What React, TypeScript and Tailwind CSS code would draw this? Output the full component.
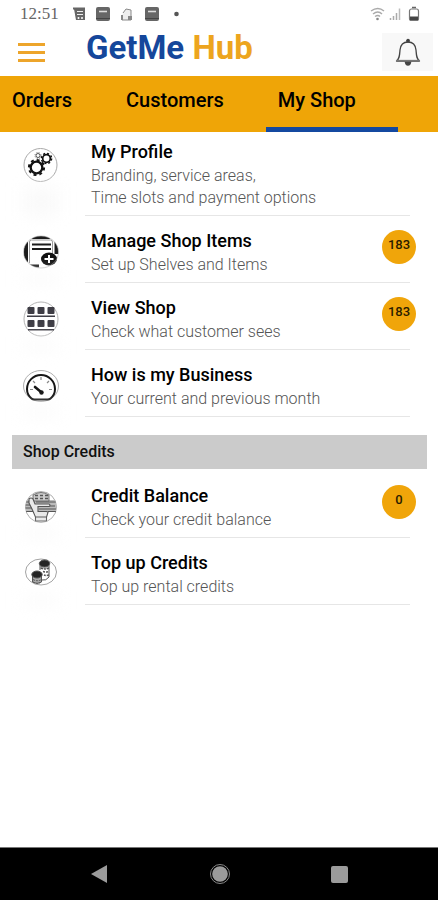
import React from 'react';

interface ShopItem {
  title: string;
  lines: string[];
  icon: React.ReactNode;
  badge?: number;
}

const GearsIcon = () => (
  <svg viewBox="0 0 36 36" className="h-9 w-9" fill="none" stroke="#111">
    <circle cx="17.500" cy="18" r="16.500" stroke="#aaa" />
    <circle cx="13.500" cy="20.500" r="5.800" strokeWidth="2.300" />
    <circle cx="13.500" cy="20.500" r="7.600" strokeWidth="2" strokeDasharray="2.980 2.980" />
    <circle cx="23.500" cy="11.500" r="3.800" strokeWidth="1.700" />
    <circle cx="23.500" cy="11.500" r="5.100" strokeWidth="1.500" strokeDasharray="2 2" />
    <circle cx="15" cy="8.500" r="2" stroke="#555" strokeWidth="1" />
    <circle cx="15" cy="8.500" r="3" stroke="#777" strokeWidth="1" strokeDasharray="1.200 1.200" />
  </svg>
);

const ListAddIcon = () => (
  <svg viewBox="0 0 36 36" className="h-9 w-9" fill="none" stroke="#1c1c1c">
    <clipPath id="listClip"><ellipse cx="18" cy="18" rx="17.5" ry="16" /></clipPath>
    <g clipPath="url(#listClip)">
      <path d="M9 3.500h18" strokeWidth="3" />
      <path d="M3 8v20M33.500 8v12" strokeWidth="4" />
      <path d="M6.500 29V8q0-2 2-2h19q2 0 2 2v12" stroke="#999" strokeWidth="1" />
      <path d="M9 10.500h19M9 15h19" strokeWidth="2.200" />
      <path d="M7 32h9" strokeWidth="3" />
    </g>
    <ellipse cx="26" cy="25" rx="8" ry="6.500" fill="#111" stroke="none" />
    <path d="M21.500 25h9M26 21v8" stroke="#fff" strokeWidth="2" />
    <ellipse cx="18" cy="18" rx="17.500" ry="16" stroke="#aaa" strokeWidth="0.600" />
  </svg>
);

const ShelvesIcon = () => (
  <svg viewBox="0 0 36 36" className="h-9 w-9" fill="#3e3d45">
    <circle cx="18" cy="18" r="17" fill="none" stroke="#aaa" strokeWidth="0.9" />
    <rect x="4.500" y="6" width="7" height="7" rx="1" />
    <rect x="14.500" y="6" width="7" height="7" rx="1" />
    <rect x="24.500" y="6" width="7" height="7" rx="1" />
    <rect x="4.500" y="19" width="7" height="7" rx="1" />
    <rect x="14.500" y="19" width="7" height="7" rx="1" />
    <rect x="24.500" y="19" width="7" height="7" rx="1" />
    <path d="M4 14.500h28v1.600H4zM5 28h26v1.600H5z" />
  </svg>
);

const GaugeIcon = () => (
  <svg viewBox="0 0 36 36" className="h-9 w-9" fill="none" stroke="#161616">
    <ellipse cx="18" cy="18" rx="17.5" ry="15.500" stroke="#999" strokeWidth="0.8" />
    <path d="M8.500 30.500C5.500 28 4 25 4 21a14 14 0 0 1 28 0c0 4-1.500 7-4.500 9.500q-1 1-3 1h-13q-2 0-3-1z" strokeWidth="2" strokeLinejoin="round" />
    <path d="M18 9v3M7 21.500h3M26 21.500h3M10 13l2 2M26 13l-2 2" stroke="#888" strokeWidth="1.200" />
    <path d="M12 19l6 5" strokeWidth="2.600" strokeLinecap="round" />
    <circle cx="18.500" cy="24.500" r="2.200" fill="#161616" stroke="none" />
  </svg>
);

const BalanceIcon = () => (
  <svg viewBox="0 0 36 36" className="h-9 w-9" fill="none" stroke="#555">
    <clipPath id="balanceClip"><circle cx="18" cy="18" r="15.500" /></clipPath>
    <circle cx="18" cy="18" r="15.500" stroke="#999" strokeWidth="0.800" />
    <g clipPath="url(#balanceClip)">
      <rect x="2" y="11" width="32" height="11.500" fill="#bbb" stroke="none" />
      <path d="M10 12V6q8-5 16 0v6z" fill="#ccc" strokeWidth="0.800" />
      <path d="M12 6.500h3M17 6.500h3M22 6.500h3M12 9.500h3M17 9.500h3M22 9.500h3" strokeWidth="1.500" />
      <path d="M2 13h9M13 13h21M2 16h6M15 17h17M2 19h7M16 20h17M2 22.500h9M25 22.500h9" strokeWidth="1.100" />
      <path d="M6 10q2-2 4 0l2 5h14q2 1 0 2.500H15v5h9l1 1-1.500 4.500v4h-11v-4L9 20 6 14z" fill="#e9e9e9" strokeWidth="1.100" />
      <path d="M12.500 28h11" strokeWidth="1" />
    </g>
  </svg>
);

const CoinsIcon = () => (
  <svg viewBox="0 0 36 36" className="h-9 w-9" fill="none" stroke="#555">
    <ellipse cx="18" cy="16" rx="15.500" ry="13" stroke="#999" strokeWidth="0.900" />
    <path d="M17 9v4h9V9z" fill="#ccc" stroke="none" />
    <path d="M17 9v5M26 9v12M19 24q4 1 7-3" strokeWidth="1" />
    <path d="M18 12q4 2 8 0M20 15.500q3 1 6 0M21 19q2 1 5 0" strokeWidth="1.400" strokeDasharray="2 1" />
    <path d="M9.500 19v7q4.500 3 9 0v-7" fill="#aaa" strokeWidth="1" />
    <path d="M10 23.500q4.500 2.500 8.500 0M10 26q4.500 2.500 8.500 0" strokeWidth="1" strokeDasharray="2 1" />
    <ellipse cx="21.500" cy="7.500" rx="5.200" ry="3.500" fill="#252525" />
    <ellipse cx="14" cy="18.500" rx="5.200" ry="3.500" fill="#252525" />
  </svg>
);

const shopItems: ShopItem[] = [
  { title: 'My Profile', lines: ['Branding, service areas,', 'Time slots and payment options'], icon: <GearsIcon /> },
  { title: 'Manage Shop Items', lines: ['Set up Shelves and Items'], icon: <ListAddIcon />, badge: 183 },
  { title: 'View Shop', lines: ['Check what customer sees'], icon: <ShelvesIcon />, badge: 183 },
  { title: 'How is my Business', lines: ['Your current and previous month'], icon: <GaugeIcon /> },
];

const creditItems: ShopItem[] = [
  { title: 'Credit Balance', lines: ['Check your credit balance'], icon: <BalanceIcon />, badge: 0 },
  { title: 'Top up Credits', lines: ['Top up rental credits'], icon: <CoinsIcon /> },
];

const tabs = ['Orders', 'Customers', 'My Shop'];

const StatusBar = () => (
  <div className="flex h-7 items-center justify-between pr-4 pl-5">
    <div className="flex items-center">
      <span className="w-[53px] font-['Liberation_Serif',serif] text-[17px] leading-7 text-[#666]">12:51</span>
      <svg viewBox="0 0 106 16" className="h-4 w-[106px]">
        <path d="M-1 1.500h13v2H-1z" fill="#666" />
        <path d="M1 3h11v11H3z" fill="#666" />
        <path d="M4 5.500h6M4 8.500h6" stroke="#eee" strokeWidth="1.200" />
        <circle cx="5.500" cy="12" r="1" fill="#fff" /><circle cx="9" cy="12" r="1" fill="#fff" />
        <rect x="23" y="1" width="14" height="14" rx="2" fill="#666" />
        <path d="M26 5.500h8" stroke="#ddd" strokeWidth="1.600" />
        <path d="M23 12.500h14" stroke="#444" />
        <path d="M50 7l3-4 5 1v10h-9V9" fill="#eee" stroke="#888" strokeWidth="1" />
        <path d="M48 14V9h2v5M55 14v-4h4v4" fill="#888" />
        <rect x="72" y="1" width="14" height="14" rx="2" fill="#666" />
        <path d="M75 5.500h8" stroke="#ddd" strokeWidth="1.600" />
        <path d="M72 12.500h14" stroke="#444" />
        <circle cx="103.500" cy="8" r="2.300" fill="#555" />
      </svg>
    </div>
    <svg viewBox="0 0 52 16" className="h-4 w-[52px]" fill="none">
      <path d="M1 5q7-5 13 0M3 8q5-4 9 0M5 10.500q3-2 5 0" stroke="#aaa" strokeWidth="1.400" />
      <circle cx="7.500" cy="13" r="1.300" fill="#888" />
      <path d="M20.500 14v-2M23.500 14v-4M26.500 14V7" stroke="#aaa" strokeWidth="1.500" />
      <path d="M29.500 14V2.500" stroke="#bbb" strokeWidth="1.500" />
      <rect x="39.500" y="3" width="9" height="11.500" rx="2" stroke="#777" strokeWidth="1.200" />
      <path d="M42 1.500h4" stroke="#666" strokeWidth="1.500" />
      <path d="M40 10.500h8v3.500h-8z" fill="#444" />
    </svg>
  </div>
);

const ItemRow: React.FC<{ item: ShopItem; first?: boolean }> = ({ item, first }) => (
  <li>
    <button className="flex w-full pr-7 text-left">
      <span className={`flex w-[85px] flex-shrink-0 flex-col items-center self-stretch pr-1 ${first ? 'pt-[15px]' : 'pt-[18px]'}`}>
        {item.icon}
        <span className="mt-1 min-h-2 w-9 flex-1 bg-[#fafafa] blur-sm" />
      </span>
      <span className={`flex flex-1 items-start justify-between border-b border-[#e6e6e6] pb-[6px] pl-[6px] ${first ? 'pt-[9px]' : 'pt-[14px]'}`}>
        <span className="flex flex-col gap-[2px]">
          <span className="text-lg leading-[22px] font-medium text-black">{item.title}</span>
          <span className="text-base leading-[22px] font-light text-[#555]">
            {item.lines.map(line => <span key={line} className="block">{line}</span>)}
          </span>
        </span>
        {item.badge !== undefined && (
          <span className="-mr-[6px] flex h-[34px] w-[34px] items-center justify-center rounded-full bg-[#f0a50a] pb-1 text-[13px] font-medium text-[#2a1c00]">
            {item.badge}
          </span>
        )}
      </span>
    </button>
  </li>
);

export default function App() {
  return (
    <div className="flex min-h-screen flex-col bg-white font-[Roboto,sans-serif]">
      <StatusBar />
      <header className="flex h-12 items-center pr-[5px] pl-[18px]">
        <button aria-label="Menu" className="flex w-[27px] flex-col gap-[5px]">
          <span className="h-[3px] w-full bg-[#eda52b]" />
          <span className="h-[3px] w-full bg-[#eda52b]" />
          <span className="h-[3px] w-full bg-[#eda52b]" />
        </button>
        <h1 className="ml-[41px] flex-1 pb-2 text-[33px] leading-[38px] font-bold text-[#15479b]">
          GetMe <span className="text-[#eda51e]">Hub</span>
        </h1>
        <button aria-label="Notifications" className="flex h-[38px] w-[51px] items-center justify-center bg-[#f8f8f8]">
          <svg viewBox="0 0 26 28" className="h-7 w-[26px]" fill="none" stroke="#444" strokeWidth="1.300">
            <path d="M1.500 23c3-2 3-5 3.500-11 .5-5 3-8 8-8s7.500 3 8 8c.5 6 .5 9 3.500 11z" strokeLinejoin="round" />
            <path d="M1 22.500h24" stroke="#777" />
            <circle cx="13" cy="2.800" r="1.300" fill="#333" />
            <path d="M10.500 24.500h5q-.5 2.500-2.500 2.500t-2.500-2.500z" fill="#444" />
          </svg>
        </button>
      </header>

      <nav className="flex h-14 bg-[#efa507]">
        {tabs.map(tab => (
          <button
            key={tab}
            className={`border-b-[5px] pr-[42px] pb-[3px] pl-3 text-xl font-medium text-black ${tab === 'My Shop' ? 'border-[#1449a0]' : 'border-transparent'}`}
          >
            {tab}
          </button>
        ))}
      </nav>

      <main className="flex-1">
        <ul>
          {shopItems.map((item, i) => <ItemRow key={item.title} item={item} first={i === 0} />)}
        </ul>
        <h2 className="mt-[18px] mr-[11px] mb-[2px] ml-3 bg-[#cbcbcb] px-[11px] text-base leading-[34px] font-medium text-[#111]">
          Shop Credits
        </h2>
        <ul>
          {creditItems.map(item => <ItemRow key={item.title} item={item} />)}
        </ul>
      </main>

      <footer className="flex h-[53px] items-center justify-between border-t border-[#777] bg-black px-[90px]">
        <button aria-label="Back">
          <svg viewBox="0 0 18 20" className="h-5 w-[18px]"><path d="M1 10L17 1v18z" fill="#9b9b9b" /></svg>
        </button>
        <button aria-label="Home">
          <svg viewBox="0 0 22 22" className="h-[22px] w-[22px]">
            <circle cx="11" cy="11" r="9.500" fill="none" stroke="#888" strokeWidth="1" />
            <circle cx="11" cy="11" r="7.800" fill="#9b9b9b" />
          </svg>
        </button>
        <button aria-label="Recent apps" className="h-[17px] w-[17px] rounded-xs bg-[#9b9b9b]" />
      </footer>
    </div>
  );
}
